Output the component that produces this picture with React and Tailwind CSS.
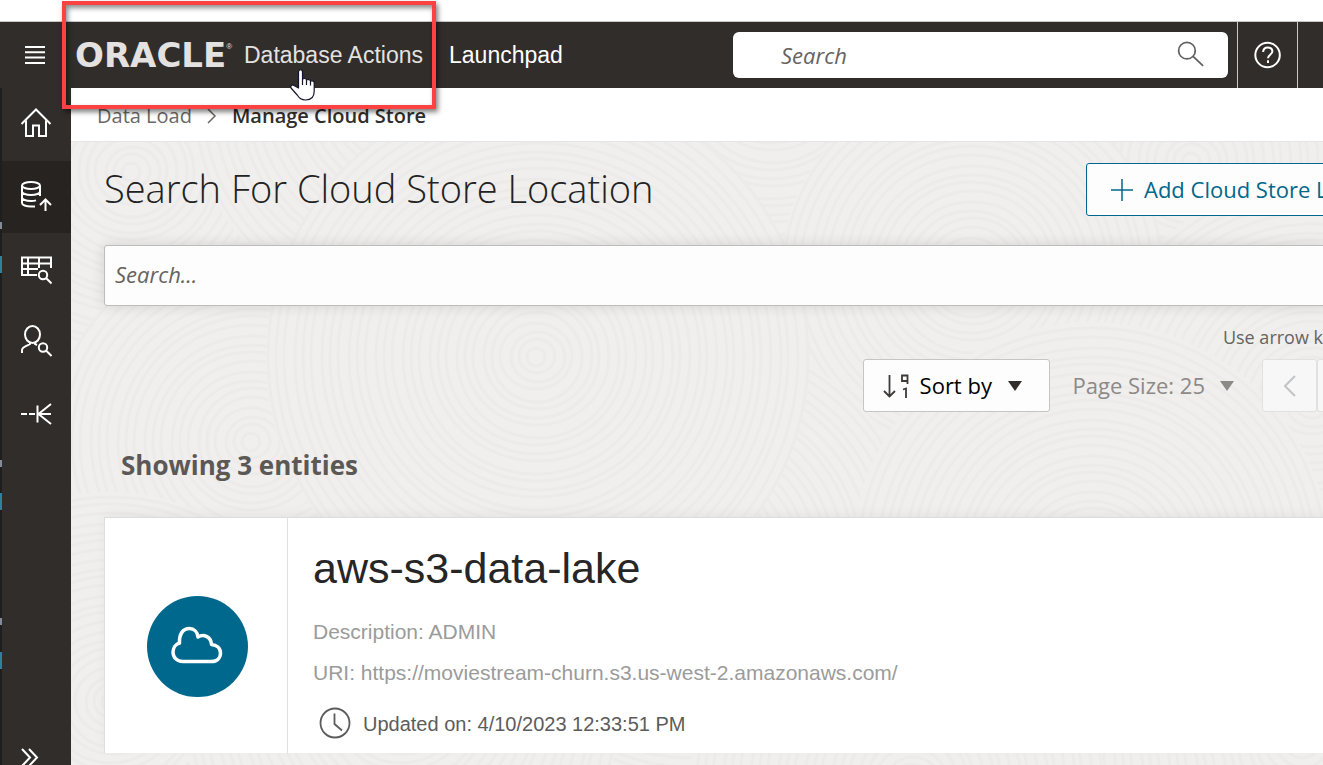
import React from "react";

const segoe = "font-['Open_Sans','Noto_Sans',sans-serif]";
const arial = "font-['Liberation_Sans',Arial,sans-serif]";

const swirls = [
  [60, 30, 190], [330, -40, 210], [700, -60, 260], [1120, 20, 230],
  [900, 130, 190], [1240, 260, 220], [180, 300, 200], [40, 560, 210],
  [620, 420, 230], [1020, 420, 240], [330, 560, 220], [840, 640, 220],
  [1230, 600, 200], [465, 215, 270],
];

function Texture() {
  return (
    <svg aria-hidden="true" className="absolute inset-0 h-full w-full">
      {swirls.map(([cx, cy, r], i) => (
        <g key={i} fill="none" stroke="#ecebe9" strokeWidth="3">
          <circle cx={cx} cy={cy} r={r} fill="#f0efee" stroke="none" />
          {Array.from({ length: Math.floor(r / 9) }, (_, k) => (
            <ellipse key={k} cx={cx + (k % 3)} cy={cy - (k % 2)} rx={(k + 1) * 9} ry={(k + 1) * 9 - (k % 4)} />
          ))}
        </g>
      ))}
    </svg>
  );
}

function Icon({ size = "h-8 w-8", children, sw = 2 }) {
  return (
    <svg viewBox="0 0 32 32" className={size} fill="none" stroke="currentColor" strokeWidth={sw} aria-hidden="true">
      {children}
    </svg>
  );
}

const nav = [
  {
    label: "Home", box: "h-[73px]",
    art: <path d="M1.500 17 16 2.500 30.500 17M6 13.500V29h7V18.500h6V29h7V13.500" />,
  },
  {
    label: "Data Load", box: "h-[72px] bg-[#272320]",
    art: (
      <>
        <ellipse cx="11" cy="5.500" rx="9" ry="3.500" />
        <path d="M2 5.500V23c0 2 4 3.500 9 3.500h4M20 5.500V16M2 11.500c0 2 4 3.500 9 3.500s9-1.500 9-3.500M2 17.500c0 2 4 3.500 9 3.500 2 0 4-.3 5-.6" />
        <path d="M25.500 31V20M20 25l5.500-5.500L31 25" />
      </>
    ),
  },
  {
    label: "Catalog", box: "h-[73px] pt-1",
    art: (
      <>
        <path d="M17 21H2V3.500h29V14M2 9.500h29M2 15h16M8 4v17M19 4v10" />
        <circle cx="23" cy="21" r="4.200" />
        <path d="M26 24l5.500 5.500" />
      </>
    ),
  },
  {
    label: "Data Insights", box: "h-[73px]",
    art: (
      <>
        <ellipse cx="12.500" cy="9.500" rx="7.500" ry="8.500" />
        <path d="M2 28v-3c0-3 5-4 8-6v-2M15 17v2l2 1" />
        <circle cx="23" cy="22.500" r="4.200" />
        <path d="M26 25.500l5.500 5.500" />
      </>
    ),
  },
  {
    label: "Business Models", box: "h-[73px]",
    art: <path d="M1 16h6M9 16h6M17.500 7.500v17M31 16H18M31 6 18.500 16 31 26" />,
  },
];

export default function App() {
  return (
    <div className={`${segoe} relative flex h-screen flex-col overflow-hidden bg-white pt-[21px]`}>
      <header className={`${arial} flex h-[67px] shrink-0 items-stretch border-t border-[#c8c8c8] bg-[#312d2a] pl-0.5 text-[23px] text-white`}>
        <button aria-label="Navigation menu" className="flex w-[69px] items-center justify-center pr-1">
          <svg viewBox="0 0 20 18" className="h-[18px] w-5" stroke="currentColor" strokeWidth="2" aria-hidden="true">
            <path d="M0 1h20M0 6.300h20M0 11.600h20M0 17h20" />
          </svg>
        </button>
        <a href="#home" className="flex items-center pl-1 text-[#e3e2e1]">
          <span className="flex w-[169px] items-center">
            <span className="font-['DejaVu_Sans',sans-serif] text-[34px] font-bold leading-8">ORACLE</span>
            <span className="self-start text-[8px] leading-4">®</span>
          </span>
          <span>Database Actions</span>
        </a>
        <a href="#launchpad" className="ml-[26px] flex items-center">Launchpad</a>
        <div className="flex-1" />
        <label className={`${segoe} my-2.5 mr-[9px] flex w-[495px] items-center rounded-md bg-white pl-12 pr-6 text-[#606060]`}>
          <input aria-label="Search" placeholder="Search" className="min-w-0 flex-1 text-[22px] italic outline-none placeholder:text-[#67635f]" />
          <Icon size="h-7 w-7">
            <circle cx="12.500" cy="11" r="9.500" /><path d="M19.500 17.500 31 28.500" />
          </Icon>
        </label>
        <button aria-label="Help" className="flex w-[61px] items-center justify-center border-x border-[#c9c8c6]">
          <Icon size="h-7 w-7" sw={2.3}>
            <circle cx="15.500" cy="16" r="14" />
            <path d="M10.500 12.500c0-7 10.500-6.500 10.500-.8 0 4-5 4-5 8M16 22v3" />
          </Icon>
        </button>
        <div className="w-[25px]" />
      </header>

      <div className="flex min-h-0 flex-1">
        <svg aria-hidden="true" className="w-0.5 shrink-0 self-stretch bg-[#1e1e1e]">
          <path d="M0 168h2v17H0zM0 405h2v17H0zM0 564h2v17H0z" fill="#3080a0" />
          <path d="M0 134h2v7H0zM0 372h2v7H0zM0 530h2v7H0z" fill="#868b98" />
        </svg>
        <nav className="flex w-[69px] shrink-0 flex-col bg-[#312d2a] text-white">
          {nav.map((n) => (
            <a key={n.label} href="#nav" aria-label={n.label} className={`${n.box} flex shrink-0 items-center justify-center pb-[3px] pr-px`}>
              <Icon>{n.art}</Icon>
            </a>
          ))}
          <button aria-label="Expand" className="mt-auto flex h-[18px] items-start pl-[18px]">
            <svg viewBox="0 0 20 20" className="h-5 w-5 shrink-0" fill="none" stroke="currentColor" strokeWidth="2" aria-hidden="true">
              <path d="M2 2l8 8.500L2 19M9 2l8 8.500L9 19" />
            </svg>
          </button>
        </nav>

        <main className="flex min-w-0 flex-1 flex-col overflow-hidden">
          <div className="flex h-[54px] shrink-0 items-center gap-[15px] border-b border-[#e4e4e4] bg-white pl-[26px] pt-0.5 text-[20px] text-[#6b6865]">
            <a href="#load">Data Load</a>
            <svg viewBox="0 0 10 16" className="h-4 w-2.5" fill="none" stroke="currentColor" strokeWidth="1.500" aria-hidden="true"><path d="M1 1l7 7-7 7" /></svg>
            <span className="font-semibold text-[#312d2a]">Manage Cloud Store</span>
          </div>

          <div className="relative min-h-0 flex-1 overflow-hidden bg-[#f0efee]">
            <Texture />
            <div className="relative flex flex-col pl-[33px]">
              <div className="flex items-center justify-between pt-[21px]">
                <h1 className="pb-1 text-[38px] font-light leading-[48px] text-[#222]">Search For Cloud Store Location</h1>
                <button className="-mr-1 flex h-[53px] w-[241px] items-center gap-[11px] overflow-hidden whitespace-nowrap rounded-[3px] border border-[#00688c] bg-[#fdfdfd] pl-6 text-[22px] text-[#00688c]">
                  <svg viewBox="0 0 22 22" className="h-[22px] w-[22px] shrink-0" stroke="currentColor" strokeWidth="1.500" aria-hidden="true"><path d="M11 0v22M0 11h22" /></svg>
                  Add Cloud Store L
                </button>
              </div>
              <input aria-label="Search cloud store locations" placeholder="Search..." className="-mr-1 mt-[29px] h-[61px] rounded-[3px] border border-[#bdbcbb] bg-[#fdfdfd] px-2.5 pb-1 text-[22px] italic shadow-[0_0_14px_rgba(0,0,0,0.12)] outline-none placeholder:text-[#67635f]" />
              <p className="mt-4 h-[30px] self-end text-[18px] leading-[30px] text-[#67635f]">Use arrow k</p>
              <div className="mt-[7px] flex items-center justify-end">
                <button className="flex h-[53px] w-[187px] items-center rounded-[3px] border border-[#c6c5c4] bg-[#fdfdfd] pl-[19px] text-[22px] text-black">
                  <svg viewBox="0 0 26 24" className="mr-[11px] h-6 w-[26px]" fill="none" stroke="#3d3a38" strokeWidth="1.800" aria-hidden="true">
                    <path d="M6.500 1v21M1 17l5.500 5.500L12 17M24.500 10V1.500H19V7h5.500M20 15.500l3-1V24" />
                  </svg>
                  Sort by
                  <svg viewBox="0 0 14 10" className="ml-4 h-2.5 w-3.5" fill="#312d2a" aria-hidden="true"><path d="M0 0h14L7 10z" /></svg>
                </button>
                <button className="ml-[23px] flex items-center text-[22px] text-[#8c8987]">
                  Page Size: 25
                  <svg viewBox="0 0 14 10" className="ml-[15px] h-2.5 w-3.5" fill="currentColor" aria-hidden="true"><path d="M0 0h14L7 10z" /></svg>
                </button>
                <button aria-label="Previous page" className="ml-7 flex h-[53px] w-[55px] items-center justify-center rounded-[3px] border border-[#e2e1e0] bg-[#f7f7f7] text-[#c2c4c5]">
                  <svg viewBox="0 0 12 22" className="h-[22px] w-3" fill="none" stroke="currentColor" strokeWidth="2" aria-hidden="true"><path d="M11 1 1 11l10 10" /></svg>
                </button>
                <div className="h-[53px] w-1.5 rounded-l-[3px] border-y border-l border-[#e2e1e0] bg-[#f7f7f7]" />
              </div>
              <h2 className="mt-[35px] pl-[17px] text-[26px] font-bold leading-9 text-[#5b5855]">Showing 3 entities</h2>

              <article className={`${arial} mt-[34px] flex h-[236px] border-l border-t border-[#dcdcdc] bg-white shadow-[0_-4px_10px_rgba(0,0,0,0.04)]`}>
                <div className="flex w-[183px] shrink-0 items-center justify-center border-r border-[#e0e0e0] pl-0.5 pt-[22px]">
                  <div className="flex h-[101px] w-[101px] items-center justify-center rounded-full bg-[#00688c] pb-1 text-white">
                    <svg viewBox="0 0 52 38" className="h-[38px] w-[52px]" fill="none" stroke="currentColor" strokeWidth="3.500" strokeLinejoin="round" aria-hidden="true">
                      <path d="M12 35.500C5.500 35.500 2 31 2 26c0-4.500 3-8 6.500-9C8 8 12 2.500 18.500 2.500c4.500 0 8 3.500 8.500 8.500 6-3.500 13 0 13.500 7.500 5 .5 9 3.500 9 8.500s-3.500 8.500-9 8.500z" />
                    </svg>
                  </div>
                </div>
                <div className="flex flex-col pl-[25px] pt-6 text-[20px] leading-6">
                  <h3 className="text-[43px] leading-[52px] text-[#262626]">aws-s3-data-lake</h3>
                  <p className="mt-[26px] text-[21px] text-[#9b9b9b]">Description: ADMIN</p>
                  <p className="mt-[17px] text-[21px] text-[#9b9b9b]">URI: https://moviestream-churn.s3.us-west-2.amazonaws.com/</p>
                  <p className="mt-[22px] flex items-center gap-3 pl-1.5 text-[#5c5c5c]">
                    <Icon>
                      <circle cx="16" cy="16" r="14.500" strokeWidth="1.800" /><path d="M15.500 6.500v10.500l7.500 6.500" strokeWidth="1.800" />
                    </Icon>
                    <span className="pt-0.5">Updated on: 4/10/2023 12:33:51 PM</span>
                  </p>
                </div>
              </article>
            </div>
          </div>
        </main>
      </div>

      <div className="pointer-events-none absolute left-[62px] top-px h-[108px] w-[374px] border-4 border-[#fb4141] shadow-[2px_3px_5px_rgba(0,0,0,0.5),inset_2px_3px_5px_rgba(0,0,0,0.45)]" />
      <svg viewBox="0 0 25 32" className="pointer-events-none absolute left-[290px] top-[69px] h-8 w-[25px]" fill="#fff" stroke="#15152a" strokeWidth="1.200" strokeLinejoin="round" aria-hidden="true">
        <path d="M8.500 19V3c0-3 4-3 4 0v8c0-2 4-2 4 0v.8c0-2 4-1.500 4 .4v.8c0-1.800 3.700-1.500 3.700.8V22c0 6-3.500 9-8.500 9-4.500 0-6-1.500-8.500-5L1 19c-1-2 1-4 3-2.500z" />
        <path d="M12.500 11v5M16.500 12v4M20.500 13v3.500" />
      </svg>
    </div>
  );
}
